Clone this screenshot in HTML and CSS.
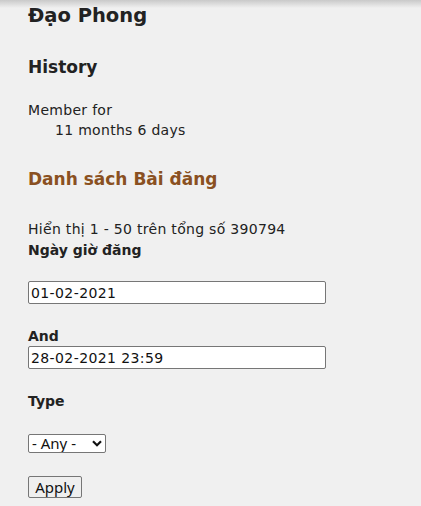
FILE: index.html
```html
<!DOCTYPE html>
<html lang="vi">
<head>
<meta charset="utf-8">
<title>Đạo Phong</title>
<link rel="stylesheet" href="styles.css">
</head>
<body>
<div class="top-shadow"></div>
<main class="page">
  <h1 class="title">Đạo Phong</h1>
  <h2 class="section">History</h2>
  <dl class="history">
    <dt>Member for</dt>
    <dd>11 months 6 days</dd>
  </dl>
  <h2 class="section section-brown">Danh sách Bài đăng</h2>
  <p class="summary">Hiển thị 1 - 50 trên tổng số 390794</p>
  <form class="filters">
    <div class="field">
      <label class="label" for="from">Ngày giờ đăng</label>
      <input class="text-input first-input" id="from" type="text" value="01-02-2021">
    </div>
    <div class="field">
      <label class="label" for="to">And</label>
      <input class="text-input" id="to" type="text" value="28-02-2021 23:59">
    </div>
    <div class="field">
      <label class="label" for="type">Type</label>
      <span class="select-wrap">
        <select class="select" id="type">
          <option>- Any -</option>
        </select>
        <svg class="chevron" width="10" height="7" viewBox="0 0 10 7" aria-hidden="true">
          <path d="M1 1.2 L5 5.2 L9 1.2" fill="none" stroke="#111" stroke-width="2.2"/>
        </svg>
      </span>
    </div>
    <div class="field">
      <button class="button" type="button">Apply</button>
    </div>
  </form>
</main>
</body>
</html>
```
FILE: styles.css
```css
html, body {
  margin: 0;
  padding: 0;
  background: #f0f0f0;
}
body {
  font-family: "DejaVu Sans", Verdana, sans-serif;
  color: #222;
  font-size: 14px;
  line-height: 20px;
}
.top-shadow {
  height: 8px;
  margin-bottom: -8px;
  background: linear-gradient(#c9c9c9, rgba(240,240,240,0));
}
.page {
  padding: 4px 0 0 28px;
  display: flex;
  flex-direction: column;
  align-items: flex-start;
}
.title {
  margin: 0;
  font-size: 19.5px;
  line-height: 24px;
  font-weight: bold;
}
.section {
  margin: 29px 0 0;
  font-size: 17px;
  line-height: 20px;
  font-weight: bold;
}
.section-brown {
  color: #8a5021;
}
.history {
  margin: 23px 0 0;
  letter-spacing: 0.3px;
}
.history dt {
  margin: 0;
}
.history dd {
  margin: 0 0 0 27px;
}
.summary {
  margin: 30px 0 0;
  line-height: 21px;
  letter-spacing: 0.3px;
}
.filters {
  display: flex;
  flex-direction: column;
  align-items: flex-start;
  margin: 0;
}
.field {
  display: flex;
  flex-direction: column;
  align-items: flex-start;
  margin-top: 22px;
}
.field:first-child {
  margin-top: 0;
}
.label {
  font-weight: bold;
  line-height: 20px;
}
.text-input {
  box-sizing: border-box;
  width: 298px;
  height: 23px;
  margin: 0;
  padding: 0 2px;
  border: 1px solid #767676;
  border-radius: 2px;
  background: #fff;
  font-family: "DejaVu Sans", Verdana, sans-serif;
  font-size: 14px;
  letter-spacing: 0.4px;
  color: #111;
}
.first-input {
  margin-top: 21px;
}
.select-wrap {
  position: relative;
  display: block;
  margin-top: 23px;
}
.select {
  -webkit-appearance: none;
  appearance: none;
  box-sizing: border-box;
  display: block;
  width: 78px;
  height: 19px;
  margin: 0;
  padding: 0 0 0 3px;
  border: 1px solid #767676;
  border-radius: 2px;
  background: #fff;
  font-family: "Noto Sans", "Open Sans", sans-serif;
  font-size: 15px;
  line-height: 17px;
  color: #111;
}
.chevron {
  position: absolute;
  left: 64px;
  top: 6px;
  pointer-events: none;
}
.button {
  box-sizing: border-box;
  width: 54px;
  height: 22px;
  margin: 1px 0 0;
  padding: 0;
  border: 1px solid #767676;
  border-radius: 2px;
  background: #efefef;
  font-family: "Noto Sans", "Open Sans", sans-serif;
  font-size: 15px;
  line-height: 18px;
  color: #111;
}
```
